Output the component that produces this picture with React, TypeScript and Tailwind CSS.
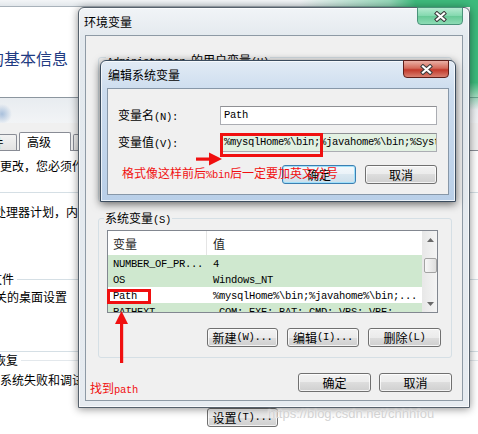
import React from "react";

const CJK = "font-['Noto_Sans_CJK_SC','Noto_Sans',sans-serif]";
const RED = "text-[#f01010]";

function M({ children }: { children: React.ReactNode }) {
  return (
    <span className="font-['Liberation_Mono',monospace] text-[10.5px] tracking-[-0.3px]">
      {children}
    </span>
  );
}

function Btn({
  className = "",
  focused = false,
  children,
}: {
  className?: string;
  focused?: boolean;
  children: React.ReactNode;
}) {
  return (
    <div
      className={`flex h-[19px] shrink-0 items-center justify-center rounded-[3px] border text-[12px] leading-none text-black ${
        focused
          ? "border-[#3c7fb1] bg-[linear-gradient(#f4f9fc,#eaf2f8_50%,#dae8f1_50%,#cddfeb)] shadow-[inset_0_0_0_1px_#9fe0fb]"
          : "border-[#707070] bg-[linear-gradient(#f2f2f2,#ebebeb_50%,#dddddd_50%,#cfcfcf)] shadow-[inset_0_0_0_1px_rgba(255,255,255,0.75)]"
      } ${className}`}
    >
      {children}
    </div>
  );
}

function CloseX() {
  return (
    <svg width="13" height="11" viewBox="0 0 13 11">
      <path d="M3 2.5 L10 8.5 M10 2.5 L3 8.5" stroke="#3b3b3b" strokeWidth="4.2" strokeLinecap="square" />
      <path d="M3 2.5 L10 8.5 M10 2.5 L3 8.5" stroke="#ffffff" strokeWidth="2.2" strokeLinecap="square" />
    </svg>
  );
}

function Tri({ down = false }: { down?: boolean }) {
  return (
    <svg width="7" height="4" viewBox="0 0 7 4">
      <path d={down ? "M0 0 L3.5 4 L7 0Z" : "M0 4 L3.5 0 L7 4Z"} fill="#6a6a6a" />
    </svg>
  );
}

const rows = [
  { name: "NUMBER_OF_PR...", value: "4", green: true },
  { name: "OS", value: "Windows_NT", green: true },
  { name: "Path", value: "%mysqlHome%\\bin;%javahome%\\bin;...", green: false },
  { name: "PATHEXT", value: ".COM;.EXE;.BAT;.CMD;.VBS;.VBE;...", green: true },
];

function ListView() {
  return (
    <div className="ml-[8px] mt-[11px] flex h-[83px] w-[331px] shrink-0 border border-[#828790] bg-white">
      <div className="flex w-[314px] flex-col overflow-hidden">
        <div className="flex h-[24px] shrink-0 items-center text-[12px] text-[#1e1e1e]">
          <div className="flex h-full w-[99px] shrink-0 items-center border-r border-[#e5e5e5] pl-[5px] pt-[2px]">
            变量
          </div>
          <div className="flex h-full items-center pl-[6px] pt-[2px]">值</div>
        </div>
        {rows.map((r) => (
          <div
            key={r.name}
            className={`flex h-[16px] shrink-0 items-center whitespace-nowrap ${r.green ? "bg-[#cfe8cf]" : "bg-white"}`}
          >
            <div className="w-[99px] shrink-0 pl-[5px]">
              <M>{r.name}</M>
            </div>
            <div className="pl-[6px]">
              <M>{r.value}</M>
            </div>
          </div>
        ))}
      </div>
      <div className="flex w-[15px] flex-col border-l border-[#e8e8e8] bg-[linear-gradient(90deg,#e8e8e8,#f4f4f4)]">
        <div className="flex h-[17px] items-center justify-center">
          <Tri />
        </div>
        <div className="flex-1 pt-[10px]">
          <div className="mx-auto h-[15px] w-[13px] rounded-[2px] border border-[#a3a3a3] bg-[linear-gradient(90deg,#f7f7f7,#dedede)]" />
        </div>
        <div className="flex h-[17px] items-center justify-center">
          <Tri down />
        </div>
      </div>
    </div>
  );
}

function EnvDialog() {
  return (
    <div className="absolute left-[78px] top-[7px] flex h-[401px] w-[392px] flex-col rounded-t-[6px] border border-[#56616c] bg-[linear-gradient(180deg,#f1f4f7,#e3e9ee_30px,#e6ebf0)] px-[6px] pb-[6px] shadow-[inset_0_0_0_1px_rgba(255,255,255,0.7),0_1px_8px_rgba(0,0,0,0.45)]">
      <div className="-ml-[1px] flex h-[27px] shrink-0 items-center leading-none">环境变量</div>
      <div className="absolute right-[6px] top-[-1px] flex h-[18px] w-[46px] items-center justify-center rounded-b-[4px] border border-[#4a927a] bg-[linear-gradient(#b4ead0,#82d8ae_50%,#66c996_50%,#8ddcb5)]">
        <CloseX />
      </div>
      <div className="relative flex-1 border border-[#8e9aa5] bg-[#f0f0f0]">
        <div className="flex flex-col pl-[12px] pr-[10px]">
          <div className="relative mt-[21px] h-[145px] shrink-0 rounded-[3px] border border-[#d5dfe5]">
            <div className="absolute left-[7px] top-[-6px] whitespace-nowrap bg-[#f0f0f0] px-[1px] leading-[16px]">
              <M>Administrator </M>的用户变量<M>(U)</M>
            </div>
          </div>
          <div className="relative mt-[16px] flex h-[140px] shrink-0 flex-col rounded-[3px] border border-[#d5dfe5]">
            <div className="absolute left-[5px] top-[-9px] whitespace-nowrap bg-[#f0f0f0] px-[1px] leading-[16px]">
              系统变量<M>(S)</M>
            </div>
            <ListView />
            <div className="mt-[15px] flex justify-end gap-[9px] pr-[10px]">
              <Btn className="w-[71px]">
                新建<M>(W)...</M>
              </Btn>
              <Btn className="w-[72px]">
                编辑<M>(I)...</M>
              </Btn>
              <Btn className="w-[73px]">
                删除<M>(L)</M>
              </Btn>
            </div>
          </div>
          <div className="mt-[15px] flex justify-end gap-[8px]">
            <Btn className="w-[73px]">确定</Btn>
            <Btn className="w-[73px]">取消</Btn>
          </div>
        </div>
        {/* annotations */}
        <div className="absolute left-[21px] top-[253px] h-[15px] w-[44px] border-[3px] border-[#f01010]" />
        <svg className="absolute left-[28px] top-[275px]" width="15" height="52" viewBox="0 0 15 52">
          <path d="M7.5 0 L14 13 L1 13 Z" fill="#f01010" />
          <rect x="6" y="12" width="3.2" height="40" fill="#f01010" />
        </svg>
        <div className={`absolute left-[4px] top-[344px] whitespace-nowrap leading-[16px] ${RED}`}>
          找到<M>path</M>
        </div>
      </div>
    </div>
  );
}

function EditDialog() {
  return (
    <div className="absolute left-[100px] top-[60px] flex h-[142px] w-[356px] flex-col rounded-t-[6px] border border-[#3b4c5e] bg-[linear-gradient(180deg,#e2ebf5,#ccdcee_30px,#b9cfe8)] px-[6px] pb-[6px] shadow-[inset_0_0_0_1px_rgba(255,255,255,0.7),0_2px_9px_rgba(0,0,0,0.6)]">
      <div className="flex h-[27px] shrink-0 items-center pl-[1px] leading-none">编辑系统变量</div>
      <div className="absolute right-[6px] top-[-1px] flex h-[18px] w-[46px] items-center justify-center rounded-b-[4px] border border-[#5e1f1a] bg-[linear-gradient(#eab0a5,#d46a5a_45%,#c2392b_55%,#d98070)]">
        <CloseX />
      </div>
      <div className="relative flex-1 border border-[#8797a8] bg-[#f0f0f0]">
        <div className="flex flex-col pl-[10px] pr-[11px] pt-[17px]">
          <div className="flex h-[19px] items-center">
            <div className="w-[102px] shrink-0 whitespace-nowrap leading-none">
              变量名<M>(N):</M>
            </div>
            <div className="flex h-[19px] w-[219px] items-center border border-[#abadb3] border-t-[#8f9094] bg-white pl-[3px]">
              <M>Path</M>
            </div>
          </div>
          <div className="mt-[8px] flex h-[19px] items-center">
            <div className="w-[102px] shrink-0 whitespace-nowrap leading-none">
              变量值<M>(V):</M>
            </div>
            <div className="flex h-[19px] w-[219px] items-center overflow-hidden whitespace-nowrap border border-[#abadb3] border-t-[#8f9094] bg-[#e2f1e2] pl-[3px]">
              <M>{"%mysqlHome%\\bin;%javahome%\\bin;%SystemRoot%\\system32"}</M>
            </div>
          </div>
          <div className="mt-[13px] flex justify-end gap-[9px]">
            <Btn focused className="w-[74px]">
              确定
            </Btn>
            <Btn className="w-[72px]">取消</Btn>
          </div>
        </div>
        {/* annotations */}
        <div className="absolute left-[112px] top-[44px] h-[24px] w-[103px] border-[3px] border-[#f01010]" />
        <svg className="absolute left-[88px] top-[63px]" width="27" height="14" viewBox="0 0 27 14">
          <rect x="0" y="5.5" width="16" height="3.2" fill="#f01010" />
          <path d="M13 0.5 L26 7 L13 13.5 Z" fill="#f01010" />
        </svg>
        <div className={`absolute left-[14px] top-[76px] whitespace-nowrap leading-[16px] ${RED}`}>
          格式像这样前后<M>%bin</M>后一定要加英文分号
        </div>
      </div>
    </div>
  );
}

export default function App() {
  return (
    <div className={`relative h-[434px] w-[478px] overflow-hidden bg-white text-[12px] text-black ${CJK}`}>
      {/* background windows */}
      <div className="flex h-full w-full flex-col">
        <div className="h-[7px] shrink-0 border-b border-[#a9b2ba] bg-[linear-gradient(#f3f5f7,#e2e7eb)]" />
        <div className="h-[90px] shrink-0 bg-white pt-[41px]">
          <div className="-ml-[12px] whitespace-nowrap text-[16px] leading-[20px] text-[#1f3b82]">的基本信息</div>
        </div>
        <div className="h-[26px] shrink-0 border-t border-[#8c969f] bg-[radial-gradient(circle_at_2px_16px,#a9c0dc_0,rgba(169,192,220,0)_10px),linear-gradient(#e8ecf0,#f2f4f6)]" />
        <div className="flex h-[27px] shrink-0 items-end bg-[#f0f0f0]">
          <div className="-ml-[34px] flex h-[16px] w-[51px] shrink-0 items-center justify-center rounded-t-[2px] border border-b-0 border-[#898c95] bg-[linear-gradient(#f3f3f3,#e2e2e2)] leading-none">
            硬件
          </div>
          <div className="relative z-10 -mb-px ml-[2px] flex h-[19px] w-[52px] shrink-0 items-center rounded-t-[2px] border border-b-0 border-[#898c95] bg-white pl-[7px] leading-none">
            高级
          </div>
          <div className="ml-[2px] flex h-[16px] w-[70px] shrink-0 items-center justify-center rounded-t-[2px] border border-b-0 border-[#898c95] bg-[linear-gradient(#f3f3f3,#e2e2e2)] leading-none">
            系统保护
          </div>
        </div>
        <div className="flex flex-1 flex-col border-t border-[#898c95] bg-white leading-[16px]">
          <div className="-ml-[12px] mt-[7px] whitespace-nowrap">数更改，您必须作为管理员登录。</div>
          <div className="mt-[18px] h-px bg-[#d5dfe5]" />
          <div className="-ml-[18px] mt-[11px] whitespace-nowrap">，处理器计划，内存使用，以及虚拟内存</div>
          <div className="mt-[51px] flex items-center">
            <div className="-ml-[58px] whitespace-nowrap">用户配置文件</div>
            <div className="ml-[3px] h-px flex-1 bg-[#d5dfe5]" />
          </div>
          <div className="-ml-[17px] mt-[2px] whitespace-nowrap">有关的桌面设置</div>
          <div className="mt-[46px] h-px bg-[#d5dfe5]" />
          <div className="flex items-center">
            <div className="-ml-[66px] whitespace-nowrap">启动和故障恢复</div>
            <div className="ml-[3px] h-px flex-1 bg-[#e3e8ec]" />
          </div>
          <div className="mt-[4px] whitespace-nowrap">系统失败和调试信息</div>
          <Btn className="ml-[207px] mt-[20px] w-[71px]">
            设置<M>(T)...</M>
          </Btn>
        </div>
      </div>

      {/* green glass of a window behind, top right */}
      <div className="absolute left-[300px] top-0 h-[7px] w-[178px] bg-[linear-gradient(90deg,rgba(61,186,124,0),rgba(61,186,124,0.5)_50%,#3dba7c_65%)]" />
      <div className="absolute left-[470px] top-0 h-[110px] w-[8px] bg-[linear-gradient(#3dba7c,#3dba7c_75%,rgba(61,186,124,0))]" />

      <EnvDialog />
      <EditDialog />

      {/* watermark */}
      <div className="absolute left-[268px] top-[406px] whitespace-nowrap font-['Liberation_Sans',sans-serif] text-[13px] leading-[16px] text-[#d2d2d2] [text-shadow:0_0_2px_#ffffff]">
        https://blog.csdn.net/chhhfou
      </div>
    </div>
  );
}
